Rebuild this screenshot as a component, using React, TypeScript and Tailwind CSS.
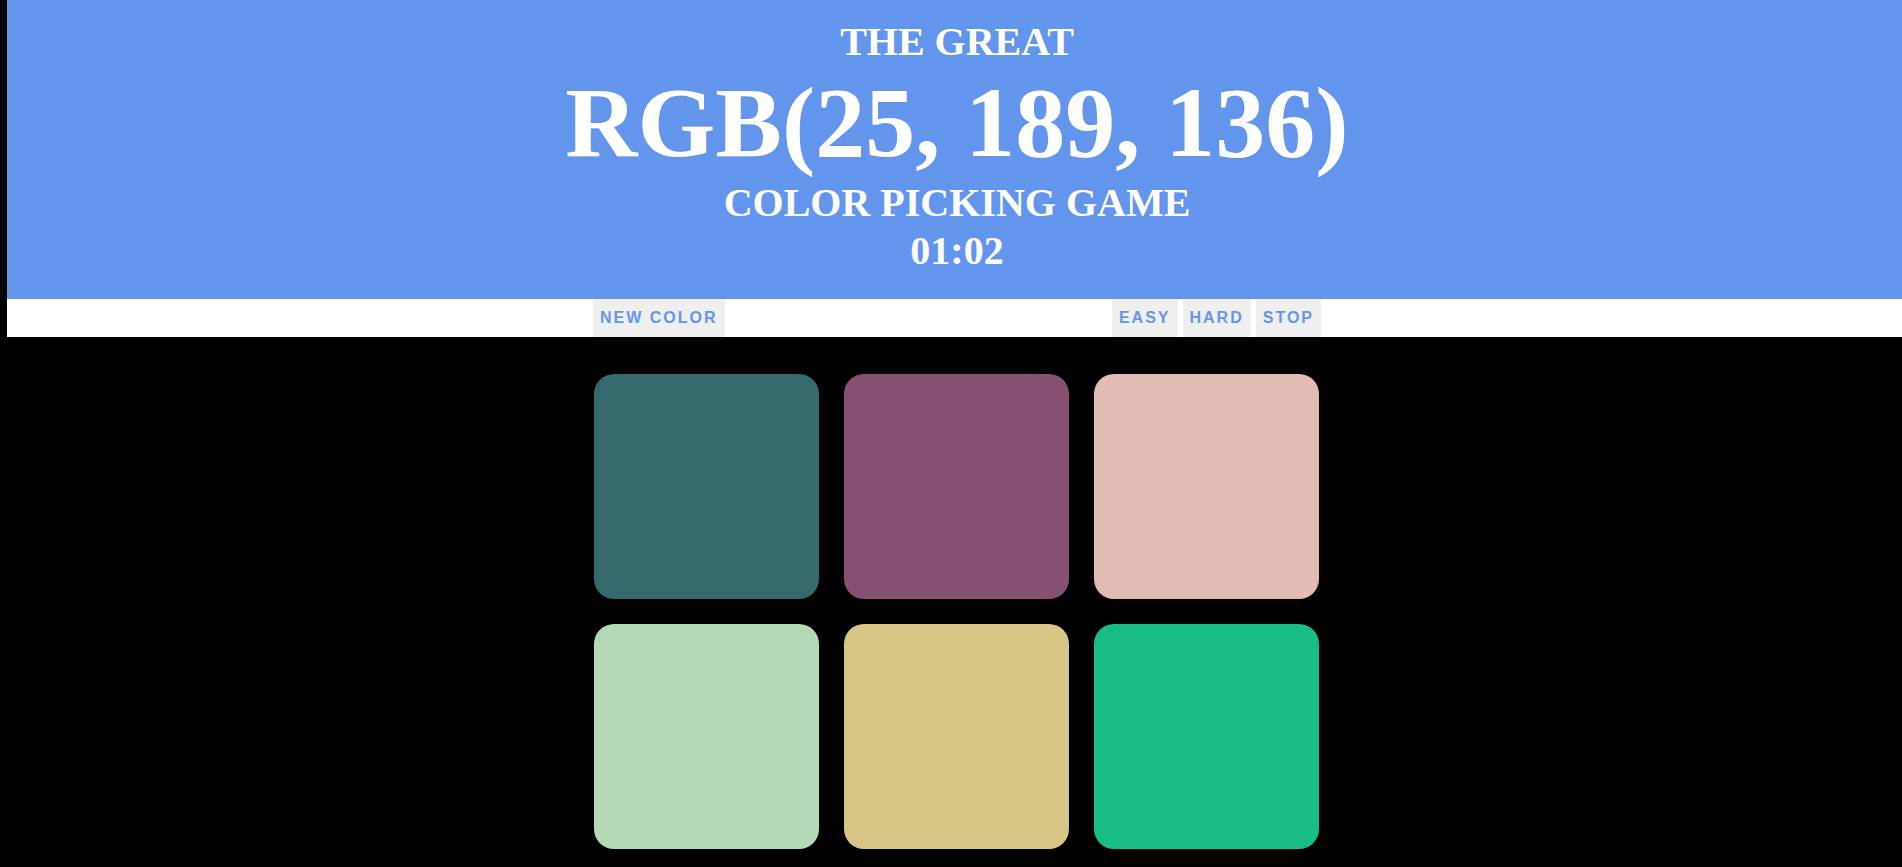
import { useState } from "react"

const startColors = [
  "rgb(54, 105, 108)",
  "rgb(134, 80, 113)",
  "rgb(226, 186, 182)",
  "rgb(180, 217, 182)",
  "rgb(216, 198, 135)",
  "rgb(25, 189, 136)",
]

const App = () => {
  const [colors, setColors] = useState(startColors)
  const [picked] = useState("rgb(25, 189, 136)")
  const [time] = useState(62)

  const mm = String(Math.floor(time / 60)).padStart(2, "0")
  const ss = String(time % 60).padStart(2, "0")

  const handleClick = (c: string, i: number) => {
    if (c !== picked) {
      const next = [...colors]
      next[i] = "#000000"
      setColors(next)
    }
  }

  const btn = "bg-[#efefef] px-[7px] h-full flex items-center uppercase tracking-[2px] cursor-pointer"

  return (
    <div className="min-h-screen bg-black flex">
      <div className="w-[7px] shrink-0" />
      <div className="flex-1 flex flex-col">
        <h1
          className="bg-[#6495ed] text-white text-center font-bold uppercase pl-[5px] pt-[19px] pb-[24px]"
          style={{ fontFamily: '"Liberation Serif", "Times New Roman", serif' }}
        >
          <div className="text-[40px] leading-[46px]">The Great</div>
          <div className="text-[100px] leading-[115px]">{picked}</div>
          <div className="text-[40px] leading-[46px]">Color Picking Game</div>
          <div className="text-[40px] leading-[49px]">{mm}:{ss}</div>
        </h1>

        <div className="bg-white h-[38px] pl-[5px]">
          <div
            className="w-[728px] h-full mx-auto flex font-bold text-[16px] text-[#6495ed]"
            style={{ fontFamily: '"Liberation Sans", Arial, sans-serif' }}
          >
            <button className={btn}>New Color</button>
            <div className="ml-auto flex gap-[5px] h-full">
              <button className={btn}>Easy</button>
              <button className={btn}>Hard</button>
              <button className={btn}>Stop</button>
            </div>
          </div>
        </div>

        <div className="pl-[4px] pt-[37px]">
          <div className="w-[725px] mx-auto grid grid-cols-3 gap-[25px]">
            {colors.map((c, i) => (
              <div
                key={i}
                onClick={() => handleClick(c, i)}
                className="w-[225px] h-[225px] rounded-[20px] cursor-pointer"
                style={{ backgroundColor: c }}
              />
            ))}
          </div>
        </div>
      </div>
    </div>
  )
}

export default App
